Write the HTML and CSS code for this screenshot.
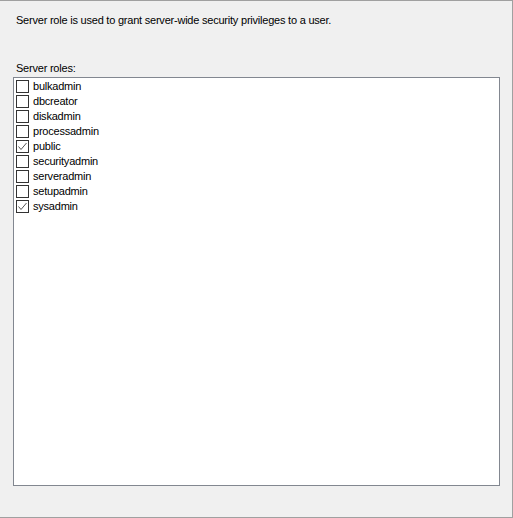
FILE: index.html
```html
<!DOCTYPE html>
<html>
<head>
<meta charset="utf-8">
<link rel="stylesheet" href="styles.css">
</head>
<body>
<div class="window">
  <p class="desc">Server role is used to grant server-wide security privileges to a user.</p>
  <div class="label">Server roles:</div>
  <div class="listbox">
    <div class="item"><span class="cb"></span><span class="txt">bulkadmin</span></div>
    <div class="item"><span class="cb"></span><span class="txt">dbcreator</span></div>
    <div class="item"><span class="cb"></span><span class="txt">diskadmin</span></div>
    <div class="item"><span class="cb"></span><span class="txt">processadmin</span></div>
    <div class="item"><span class="cb"><svg width="11" height="11" viewBox="0 0 11 11"><polyline points="1.5,5.5 4,8.5 9.5,2" fill="none" stroke="#555" stroke-width="1"/></svg></span><span class="txt">public</span></div>
    <div class="item"><span class="cb"></span><span class="txt">securityadmin</span></div>
    <div class="item"><span class="cb"></span><span class="txt">serveradmin</span></div>
    <div class="item"><span class="cb"></span><span class="txt">setupadmin</span></div>
    <div class="item"><span class="cb"><svg width="11" height="11" viewBox="0 0 11 11"><polyline points="1.5,5.5 4,8.5 9.5,2" fill="none" stroke="#555" stroke-width="1"/></svg></span><span class="txt">sysadmin</span></div>
  </div>
</div>
</body>
</html>
```
FILE: styles.css
```css
html, body {
  margin: 0;
  padding: 0;
  background: #f0f0f0;
}
.window {
  box-sizing: border-box;
  width: 513px;
  height: 518px;
  border-top: 1px solid #a0a0a0;
  border-right: 1px solid #a0a0a0;
  border-bottom: 1px solid #a0a0a0;
  background: #f0f0f0;
  font-family: "Liberation Sans", Arial, sans-serif;
  font-size: 11px;
  letter-spacing: -0.22px;
  color: #000;
  padding: 13px 0 0 16px;
}
.desc {
  margin: 0;
  line-height: 13px;
}
.label {
  margin-top: 35px;
  line-height: 13px;
}
.listbox {
  box-sizing: border-box;
  margin-left: -3px;
  margin-top: 2px;
  width: 487px;
  height: 409px;
  background: #fff;
  border: 1px solid #828790;
  padding: 1px 0 0 2px;
}
.item {
  display: flex;
  align-items: center;
  height: 15px;
}
.cb {
  box-sizing: border-box;
  width: 13px;
  height: 13px;
  border: 1px solid #333;
  background: #fff;
  display: flex;
  align-items: center;
  justify-content: center;
}
.cb svg {
  display: block;
}
.txt {
  margin-left: 4px;
  line-height: 13px;
}
```
